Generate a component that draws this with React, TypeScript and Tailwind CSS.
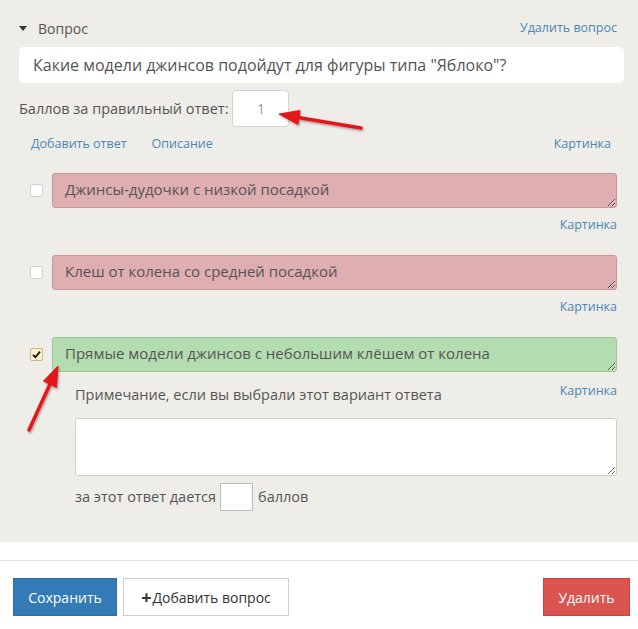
import React from 'react';

const Checkbox: React.FC<{ checked?: boolean }> = ({ checked }) => (
  <div
    className={`w-[13px] h-[13px] rounded-[2px] border flex items-center justify-center ${
      checked ? 'bg-[#fbf0c8] border-[#c8b98a]' : 'bg-white border-[#cfcfcf]'
    }`}
  >
    {checked && (
      <svg width="9" height="9" viewBox="0 0 9 9">
        <path d="M1 4.8 L3.4 7.2 L8 1.6" fill="none" stroke="#111" strokeWidth="1.8" />
      </svg>
    )}
  </div>
);

const Link: React.FC<{ children: React.ReactNode; className?: string }> = ({ children, className = '' }) => (
  <span className={`text-[12.5px] text-[#4a87b9] leading-[18px] ${className}`}>{children}</span>
);

const Answer: React.FC<{ text: string; correct?: boolean }> = ({ text, correct }) => (
  <div className="flex items-center">
    <div className="w-[33px] pl-[11px]">
      <Checkbox checked={correct} />
    </div>
    <textarea
      readOnly
      defaultValue={text}
      className={`block w-[565px] h-[35px] rounded-[3px] border px-[12px] pt-[5px] text-[15px] leading-[20px] text-[#555] outline-none overflow-hidden ${
        correct ? 'bg-[#b3dcb0] border-[#9dc79b]' : 'bg-[#dfaeb0] border-[#c99799]'
      }`}
    />
  </div>
);

export default function App() {
  return (
    <div className="relative w-[638px] h-[629px] bg-white font-['Open_Sans',sans-serif] text-[#555]">
      <div className="bg-[#efede8] h-[542px] pl-[19px] pr-[14px] pt-[18px]">
        <div className="flex items-center justify-between h-[20px]">
          <div className="flex items-center text-[14px]">
            <span className="w-0 h-0 border-l-[4px] border-r-[4px] border-t-[5px] border-l-transparent border-r-transparent border-t-[#333] mr-[11px]" />
            Вопрос
          </div>
          <Link className="pr-[7px]">Удалить вопрос</Link>
        </div>

        <div className="mt-[9px] h-[36px] rounded-[5px] bg-white px-[14px] text-[16px] leading-[36px]">
          Какие модели джинсов подойдут для фигуры типа "Яблоко"?
        </div>

        <div className="mt-[7px] flex items-center text-[14.5px]">
          <span>Баллов за правильный ответ:</span>
          <div className="ml-[4px] w-[57px] h-[37px] rounded-[4px] border border-[#d4d4d4] bg-white flex items-center justify-center text-[14px] text-[#999]">
            1
          </div>
        </div>

        <div className="mt-[7px] flex items-center h-[20px] pl-[12px] pr-[13px]">
          <Link>Добавить ответ</Link>
          <Link className="ml-[25px]">Описание</Link>
          <Link className="ml-auto">Картинка</Link>
        </div>

        <div className="mt-[19px]">
          <Answer text="Джинсы-дудочки с низкой посадкой" />
          <div className="flex justify-end pr-[7px] mt-[8px]">
            <Link>Картинка</Link>
          </div>
        </div>

        <div className="mt-[21px]">
          <Answer text="Клеш от колена со средней посадкой" />
          <div className="flex justify-end pr-[7px] mt-[8px]">
            <Link>Картинка</Link>
          </div>
        </div>

        <div className="mt-[21px]">
          <Answer text="Прямые модели джинсов с небольшим клёшем от колена" correct />
          <div className="pl-[56px] pr-[7px]">
            <div className="flex items-start justify-between mt-[10px]">
              <span className="text-[14.5px] leading-[20px] mt-[3px]">Примечание, если вы выбрали этот вариант ответа</span>
              <Link>Картинка</Link>
            </div>
            <textarea
              readOnly
              className="block mt-[13px] w-[542px] h-[58px] rounded-[3px] border border-[#cfcfcf] bg-white outline-none"
            />
            <div className="flex items-center mt-[7px] text-[14.5px]">
              <span>за этот ответ дается</span>
              <div className="ml-[4px] w-[33px] h-[28px] border border-[#bbb] bg-white" />
              <span className="ml-[5px]">баллов</span>
            </div>
          </div>
        </div>
      </div>

      <div className="h-[18px]" />
      <div className="border-t border-[#e2e2e2] pt-[17px] px-[13px] flex items-center">
        <button className="h-[38px] w-[104px] bg-[#337ab7] text-white text-[14px] border border-[#2e6da4]">
          Сохранить
        </button>
        <button className="ml-[6px] h-[38px] w-[166px] bg-white text-[#333] text-[14px] border border-[#ccc] flex items-center justify-center">
          <span className="font-bold text-[18px] leading-none mr-[1px]">+</span>Добавить вопрос
        </button>
        <button className="ml-auto mr-[-5px] h-[38px] w-[87px] bg-[#d9534f] text-white text-[14px] border border-[#d43f3a]">
          Удалить
        </button>
      </div>

      <svg className="absolute inset-0 pointer-events-none" width="638" height="629" viewBox="0 0 638 629">
        <defs>
          <filter id="sh" x="-20%" y="-20%" width="140%" height="140%">
            <feDropShadow dx="1" dy="1.5" stdDeviation="1" floodColor="#000" floodOpacity="0.35" />
          </filter>
        </defs>
        <g filter="url(#sh)" fill="#e3191b" stroke="#e3191b">
          <line x1="361" y1="128" x2="298" y2="117.5" strokeWidth="3.5" strokeLinecap="round" />
          <polygon points="279,114 300,110.5 298,124.5" strokeWidth="1" />
          <line x1="29" y1="430" x2="50" y2="384" strokeWidth="3.5" strokeLinecap="round" />
          <polygon points="58,366 56.5,387.5 43.5,381" strokeWidth="1" />
        </g>
      </svg>
    </div>
  );
}
